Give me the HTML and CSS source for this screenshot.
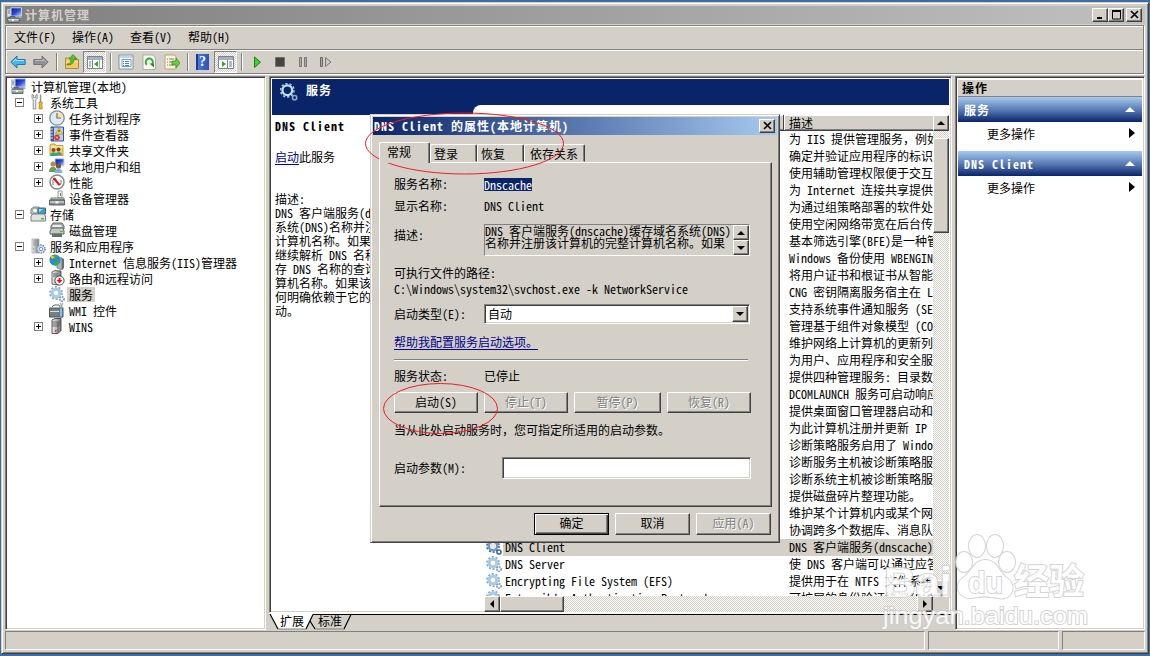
FILE: index.html
```
<!DOCTYPE html>
<html lang="zh-CN">
  <head>
    <meta charset="utf-8">
    <title>计算机管理</title>
    <link rel="stylesheet" href="styles.css">
  </head>
  <body>
    <!-- shared 16x16 icons -->
    <svg class="defs" width="0" height="0">
      <defs>
        <linearGradient id="steel" x1="0" y1="0" x2="1" y2="0">
          <stop offset="0" stop-color="#f2f2ee"/><stop offset="1" stop-color="#77797a"/>
        </linearGradient>
        <linearGradient id="screen" x1="0" y1="0" x2="1" y2="1">
          <stop offset="0" stop-color="#0617a4"/><stop offset=".5" stop-color="#2746d8"/><stop offset="1" stop-color="#c5dcff"/>
        </linearGradient>
        <symbol id="i-computer" viewBox="0 0 16 16">
          <path d="M0 2h4v8H0z" fill="#dfe3e0" stroke="#8b9694" stroke-width=".7"/>
          <path d="M1 4h2M1 6h2" stroke="#6e7c78"/>
          <path d="M4 .8h10.500v8.400H4z" fill="url(#screen)" stroke="#c9d1dc"/>
          <path d="M9 9h4l2 2H8z" fill="#a6acae"/>
          <path d="M3 11V9.500h5V11M1 11h11v4.500H1z" fill="#8d9795" stroke="#4d5654" stroke-width=".8"/>
          <path d="M1 12.800h11" stroke="#e4e8e6"/><path d="M5 12h2v2H5z" fill="#f4f4f0"/>
        </symbol>
        <symbol id="i-tools" viewBox="0 0 16 16">
          <path d="M2 .5v4l1.200 1V15h2.600V5.500l1.400-1v-4L5.800 1v2.500H3.600V1z" fill="#e9ebe9" stroke="#777d7b" stroke-width=".8"/>
          <path d="M10.500 .5v8" stroke="#8d9391" stroke-width="1.500"/>
          <path d="M9 8h3.200v2l-.6 1 .6 1v3H9v-3l.6-1L9 10z" fill="#f5b51d" stroke="#b57406" stroke-width=".6"/>
        </symbol>
        <symbol id="i-clock" viewBox="0 0 16 16">
          <circle cx="8" cy="8" r="7.200" fill="#dcebf7" stroke="#858a8b" stroke-width="1.300"/>
          <path d="M8 8V2a6 6 0 0 1 6 6z" fill="#ffe2a2"/><path d="M8 3v5h4" fill="none" stroke="#7d6a58" stroke-width="1.200"/>
        </symbol>
        <symbol id="i-event" viewBox="0 0 16 16">
          <path d="M2 1h12.500v14H2z" fill="#b9cff0" stroke="#315090"/>
          <path d="M2 1h3v14H2z" fill="#405c96"/><path d="M1 3h3M1 6h3M1 9h3M1 12h3" stroke="#d7e2f2"/>
          <path d="M10 2l3.500 6h-7z" fill="#ffdf2c" stroke="#9b8318" stroke-width=".6"/><path d="M10 4v2.200" stroke="#222"/>
          <circle cx="8" cy="11.500" r="2.800" fill="#da2a28"/><path d="M7 10.500l2 2m0-2l-2 2" stroke="#fff" stroke-width=".8"/>
        </symbol>
        <symbol id="i-share" viewBox="0 0 16 16">
          <path d="M1 3l1-1h4l1 1.500h7v10H1z" fill="#f7d370" stroke="#c79b35"/><path d="M2 5h12" stroke="#fff2be"/>
          <circle cx="4.500" cy="8" r="2" fill="#87502a"/><circle cx="9.500" cy="7.500" r="2" fill="#6e4426"/>
          <path d="M1 14c0-5 7-5 7 0z" fill="#39a678"/><path d="M6.500 13c0-4 6.500-4 6.500 0z" fill="#3e9e8c"/>
        </symbol>
        <symbol id="i-users" viewBox="0 0 16 16">
          <path d="M6 .8h9v7H6z" fill="url(#screen)" stroke="#c6ccd5"/>
          <circle cx="4" cy="6" r="2.500" fill="#b9854a"/><circle cx="9.500" cy="8" r="2.600" fill="#845336"/>
          <path d="M0 14c0-7 8-7 8 0z" fill="#67a04b"/><path d="M5.500 15c0-6 8-6 8 0z" fill="#82b1de"/>
        </symbol>
        <symbol id="i-perf" viewBox="0 0 16 16">
          <circle cx="8" cy="8" r="7" fill="#fff" stroke="#898b8c" stroke-width="1.600"/>
          <path d="M4 11V6l2-2 4 7 2-1V6" fill="none" stroke="#333" stroke-width=".7"/><path d="M4.500 4l6 7" stroke="#dd1719" stroke-width="2"/>
        </symbol>
        <symbol id="i-device" viewBox="0 0 16 16">
          <path d="M9 1h4v7H9z" fill="#f4f5f4" stroke="#999"/><path d="M11 3h1v3h-1z" fill="#54a12f"/>
          <path d="M2 8h13v2H2z" fill="#d5dad8" stroke="#6d7875"/><path d="M.5 10h15v5H.5z" fill="#86918e" stroke="#414b49" stroke-width=".8"/>
          <path d="M1 12h14" stroke="#edf0ef"/><path d="M6.500 11h3v2.500h-3z" fill="#eff1ef"/>
        </symbol>
        <symbol id="i-storage" viewBox="0 0 16 16">
          <path d="M1 3l3-2h5l1 7H1z" fill="#c8cecd" stroke="#7c8583"/><circle cx="5" cy="4.500" r="2.500" fill="#f5f5f2" stroke="#999"/>
          <path d="M8 2h7.500v6H8z" fill="#3b9dcc" stroke="#486a7b"/><path d="M9 3h4L9 6z" fill="#a5e1ee"/>
          <path d="M1 10l2-2h11l1.500 2v5H1z" fill="#e0e3e2" stroke="#798482"/><path d="M11 12h3v1.500h-3z" fill="#47be2e"/>
        </symbol>
        <symbol id="i-disk" viewBox="0 0 16 16">
          <path d="M2 4l2-3h9l2 3v3H2z" fill="#a6aba7" stroke="#656e6b"/><path d="M4 3h8l1 2H3z" fill="#eee"/>
          <path d="M1 9l2-3h11l1 3v3H1z" fill="#c3c8c5" stroke="#626c69"/><path d="M11 9h3v1h-3z" fill="#67b52f"/>
          <path d="M3 11.500h10V15H3z" fill="#666f6c"/>
        </symbol>
        <symbol id="i-gear" viewBox="0 0 16 16">
          <circle cx="7" cy="7" r="5.900" fill="none" stroke="#86abc7" stroke-width="2" stroke-dasharray="2 1.700"/>
          <circle cx="7" cy="7" r="4.200" fill="none" stroke="#a9cde6" stroke-width="2.600"/>
          <circle cx="7" cy="7" r="2.800" fill="#fff" stroke="#7ba3c3" stroke-width=".6"/>
          <circle cx="13" cy="13" r="2.100" fill="#fff" stroke="#789ebc" stroke-width="1.700" stroke-dasharray="1.500 .7"/>
        </symbol>
        <symbol id="i-gear-sel" viewBox="0 0 16 16">
          <circle cx="7" cy="7" r="5.900" fill="none" stroke="#486e9c" stroke-width="2" stroke-dasharray="2 1.700"/>
          <circle cx="7" cy="7" r="4.200" fill="none" stroke="#6e9ac9" stroke-width="2.600"/>
          <circle cx="7" cy="7" r="2.800" fill="#e9e7e2"/><circle cx="13" cy="13" r="2" fill="#fff" stroke="#466d9c" stroke-width="1.700"/>
        </symbol>
        <symbol id="i-apps" viewBox="0 0 16 16">
          <path d="M2 1h7v14H2z" fill="url(#steel)" stroke="#9fa7a8" stroke-width=".7"/><path d="M3 3h5M3 5h5M3 7h4" stroke="#8b989a"/><path d="M3 11h1" stroke="#23bb28"/>
          <circle cx="11" cy="11" r="4" fill="#dbe9f5" stroke="#749bbd" stroke-width="1.700" stroke-dasharray="1.600 .9"/><circle cx="11" cy="11" r="1.800" fill="#fff" stroke="#6d93b6"/>
        </symbol>
        <symbol id="i-iis" viewBox="0 0 16 16">
          <path d="M8 3l5 1v12l-5-2z" fill="#aeb5b6" stroke="#626c6e" stroke-width=".7"/><path d="M13 4l2 1v9l-2 2z" fill="#666f70"/>
          <circle cx="6" cy="6" r="5.600" fill="#278cd7"/><path d="M1 4C3 0 8 0 9 2L6 5 3 4zM5 8l5-2-1 5-3 1z" fill="#3aaf37"/><path d="M1 1l5 2-3 2z" fill="#ffc62b"/>
        </symbol>
        <symbol id="i-route" viewBox="0 0 16 16">
          <path d="M3 2l3-1.500L12 1v12l-3 2-6-1z" fill="url(#steel)" stroke="#454a4b" stroke-width=".8"/><path d="M4 4h5M4 6h5" stroke="#5d6262"/>
          <circle cx="10.500" cy="10.500" r="4.600" fill="#fff" stroke="#222" stroke-width=".8"/><path d="M9.500 8h2v2h2l-3 3.500-3-3.500h2z" fill="#f01515"/>
        </symbol>
        <symbol id="i-wmi" viewBox="0 0 16 16">
          <path d="M3 5l2-2h5l1 2" fill="none" stroke="#596361"/><path d="M.5 6H14v9H.5z" fill="#75817e" stroke="#4d5855"/><path d="M1 9.500h13" stroke="#dde2df"/>
          <path d="M11 6l3-5M14 6l-3-5" stroke="#b7b7b3" stroke-width="1.500"/><path d="M10.500 6h3v9h-3z" fill="#85bef1" stroke="#335c91" stroke-width=".6"/>
        </symbol>
        <symbol id="i-server" viewBox="0 0 16 16">
          <path d="M3 2l3-1.500h6v12l-3 3H3z" fill="url(#steel)" stroke="#333" stroke-width=".8"/>
          <path d="M3 4h6l3-2M3 6h6l3-2M3 8h6l3-2M9 4v11" fill="none" stroke="#555" stroke-width=".8"/><path d="M6 12h1.500v1.500H6z" fill="#f00"/>
        </symbol>
        <symbol id="i-back" viewBox="0 0 16 16">
          <path d="M.8 8L7 2v3.500h8.200v5H7V14z" fill="#3cbbf2" stroke="#1a6296" stroke-width=".8"/><path d="M3 8l3-3v1.500h8" fill="none" stroke="#a9e6fc"/>
        </symbol>
        <symbol id="i-fwd" viewBox="0 0 16 16">
          <path d="M15.200 8L9 2v3.500H.8v5H9V14z" fill="#929292" stroke="#666" stroke-width=".8"/><path d="M2 6.500h8V5l3 3" fill="none" stroke="#bcbcbc"/>
        </symbol>
        <symbol id="i-up" viewBox="0 0 16 16">
          <path d="M1.500 4h5l1 1.500h7v9h-13z" fill="#f4cb63" stroke="#b38d35"/><path d="M2.500 8h11" stroke="#ffe7a0"/>
          <path d="M4 10c3 0 4-2 4-5H6l4-4.500 4 4.500h-3c0 4-2 6-7 6z" fill="#4fc52f" stroke="#277914" stroke-width=".6" transform="translate(-1)"/>
        </symbol>
        <symbol id="i-pane-l" viewBox="0 0 16 16">
          <path d="M.5 2.500h15v12H.5z" fill="#fff" stroke="#78838d"/><path d="M1 3h14v3H1z" fill="#a5b2bd"/><path d="M5.500 6v8M9 8.500h0" stroke="#78838d"/>
          <path d="M2 8h2M2 10h2M2 12h2" stroke="#607992"/><path d="M11 7v6l-4-3z" fill="#35a71f"/><path d="M12.500 6v8" stroke="#9ea7ae"/>
        </symbol>
        <symbol id="i-pane-r" viewBox="0 0 16 16">
          <path d="M.5 2.500h15v12H.5z" fill="#fff" stroke="#78838d"/><path d="M1 3h14v3H1z" fill="#a5b2bd"/><path d="M9.500 6v8" stroke="#78838d"/>
          <path d="M11 8h3M11 10h3M11 12h3" stroke="#607992"/><path d="M4 7v6l4-3z" fill="#35a71f"/>
        </symbol>
        <symbol id="i-props" viewBox="0 0 16 16">
          <path d="M1 1h14v14H1z" fill="#f3f7fb" stroke="#7898b4"/><path d="M1 3h14" stroke="#93b2c9"/><path d="M4 5.500h9v7H4z" fill="#fff" stroke="#79a1c0"/>
          <path d="M5 7.500h1m1 0h4M5 9.500h1m1 0h4M5 11.500h1m1 0h4" stroke="#527ca0"/>
        </symbol>
        <symbol id="i-refresh" viewBox="0 0 16 16">
          <path d="M2 1h10l2.500 3v11.500H2z" fill="#fafbf9" stroke="#a8ada8"/><path d="M5.800 10.800a3.600 3.600 0 1 1 5 0" fill="none" stroke="#36ad32" stroke-width="2"/><path d="M8.500 9.500h4.500v4z" fill="#228723"/>
        </symbol>
        <symbol id="i-export" viewBox="0 0 16 16">
          <path d="M1 1h10l1 2v12H1z" fill="#fbf3d5" stroke="#b9a77b"/><path d="M3 5h1m1 0h5M3 8h1m1 0h5M3 11h1m1 0h5" stroke="#7b8185"/>
          <path d="M8 7h4V4l4 5-4 5v-3H8z" fill="#63cf3f" stroke="#348b20" stroke-width=".7"/>
        </symbol>
      </defs>
    </svg>

    <div class="window">
      <header class="titlebar">
        <svg class="icon"><use href="#i-computer"/></svg>
        <h1 class="titlebar-text">计算机管理</h1>
        <div class="caption-buttons">
          <span class="caption-btn"><svg width="11" height="10"><path d="M2 7h5v2H2z"/></svg></span>
          <span class="caption-btn"><svg width="11" height="10"><path d="M1.500 1h8v8h-8z" fill="none" stroke="#000"/><path d="M1 0h9v2H1z"/></svg></span>
          <span class="caption-btn close"><svg width="11" height="10"><path d="M2 1l7 7M9 1L2 8" stroke="#000" stroke-width="1.700"/></svg></span>
        </div>
      </header>

      <div class="bars">
        <nav class="menubar">
          <span>文件(F)</span><span>操作(A)</span><span>查看(V)</span><span>帮助(H)</span>
        </nav>
        <div class="toolbar">
          <span class="tool"><svg class="icon"><use href="#i-back"/></svg></span>
          <span class="tool"><svg class="icon"><use href="#i-fwd"/></svg></span>
          <i class="sep"></i>
          <span class="tool"><svg class="icon"><use href="#i-up"/></svg></span>
          <span class="tool pressed"><svg class="icon"><use href="#i-pane-l"/></svg></span>
          <i class="sep"></i>
          <span class="tool"><svg class="icon"><use href="#i-props"/></svg></span>
          <span class="tool"><svg class="icon"><use href="#i-refresh"/></svg></span>
          <span class="tool"><svg class="icon"><use href="#i-export"/></svg></span>
          <i class="sep"></i>
          <span class="tool"><b class="help">?</b></span>
          <span class="tool pressed"><svg class="icon"><use href="#i-pane-r"/></svg></span>
          <i class="sep"></i>
          <span class="tool"><svg class="icon" viewBox="0 0 16 16"><path d="M5.500 3v10.500L11.500 8.200z" fill="#3bd02e" stroke="#17830e"/></svg></span>
          <span class="tool"><svg class="icon" viewBox="0 0 16 16"><path d="M3.500 3.500h9v9h-9z" fill="#444" stroke="#707070"/></svg></span>
          <span class="tool"><svg class="icon" viewBox="0 0 16 16"><path d="M4.500 3.500h2v9h-2zM9.500 3.500h2v9h-2z" fill="#aaa" stroke="#777"/></svg></span>
          <span class="tool"><svg class="icon" viewBox="0 0 16 16"><path d="M2.500 3.500h2v9h-2z" fill="#aaa" stroke="#666"/><path d="M7.500 3.500v9L13 8z" fill="#c8c8c8" stroke="#777"/></svg></span>
        </div>
      </div>

      <main class="panes">
        <ul class="tree sunken">
          <li class="root"><svg class="icon"><use href="#i-computer"/></svg><span>计算机管理(本地)</span></li>
          <li><i class="box minus"></i><svg class="icon"><use href="#i-tools"/></svg><span>系统工具</span></li>
          <li class="sub"><i class="box plus"></i><svg class="icon"><use href="#i-clock"/></svg><span>任务计划程序</span></li>
          <li class="sub"><i class="box plus"></i><svg class="icon"><use href="#i-event"/></svg><span>事件查看器</span></li>
          <li class="sub"><i class="box plus"></i><svg class="icon"><use href="#i-share"/></svg><span>共享文件夹</span></li>
          <li class="sub"><i class="box plus"></i><svg class="icon"><use href="#i-users"/></svg><span>本地用户和组</span></li>
          <li class="sub"><i class="box plus"></i><svg class="icon"><use href="#i-perf"/></svg><span>性能</span></li>
          <li class="sub"><i class="box none"></i><svg class="icon"><use href="#i-device"/></svg><span>设备管理器</span></li>
          <li><i class="box minus"></i><svg class="icon"><use href="#i-storage"/></svg><span>存储</span></li>
          <li class="sub"><i class="box none"></i><svg class="icon"><use href="#i-disk"/></svg><span>磁盘管理</span></li>
          <li><i class="box minus"></i><svg class="icon"><use href="#i-apps"/></svg><span>服务和应用程序</span></li>
          <li class="sub"><i class="box plus"></i><svg class="icon"><use href="#i-iis"/></svg><span>Internet 信息服务(IIS)管理器</span></li>
          <li class="sub"><i class="box plus"></i><svg class="icon"><use href="#i-route"/></svg><span>路由和远程访问</span></li>
          <li class="sub"><i class="box none"></i><svg class="icon"><use href="#i-gear"/></svg><span class="selected">服务</span></li>
          <li class="sub"><i class="box none"></i><svg class="icon"><use href="#i-wmi"/></svg><span>WMI 控件</span></li>
          <li class="sub"><i class="box plus"></i><svg class="icon"><use href="#i-server"/></svg><span>WINS</span></li>
        </ul>

        <section class="center">
          <div class="services sunken">
            <div class="services-head">
              <svg width="18" height="18" viewBox="0 0 16 16"><circle cx="6.500" cy="6.500" r="4.300" fill="none" stroke="#c4e2f1" stroke-width="2"/><circle cx="6.500" cy="6.500" r="5.900" fill="none" stroke="#a4cbe2" stroke-width="1.500" stroke-dasharray="2 1.700"/><circle cx="13" cy="13" r="1.900" fill="none" stroke="#8fa9ca" stroke-width="1.400"/></svg>
              <h2>服务</h2>
            </div>
            <div class="services-body">
              <div class="info">
                <h3>DNS Client</h3>
                <p class="start"><a>启动</a>此服务</p>
                <p class="desc">描述:<br>DNS 客户端服务(d<br>系统(DNS)名称并注<br>计算机名称。如果<br>继续解析 DNS 名称<br>存 DNS 名称的查询<br>算机名称。如果该<br>何明确依赖于它的<br>动。</p>
              </div>
              <div class="list">
                <div class="list-main">
                  <div class="list-head"><span class="col-name"></span><span class="col-desc">描述</span></div>
                  <ol class="rows">
                    <li>为 IIS 提供管理服务<span class="fw">，</span>例如</li>
                    <li>确定并验证应用程序的标识</li>
                    <li>使用辅助管理权限便于交互</li>
                    <li>为 Internet 连接共享提供</li>
                    <li>为通过组策略部署的软件处</li>
                    <li>使用空闲网络带宽在后台传</li>
                    <li>基本筛选引擎(BFE)是一种管</li>
                    <li>Windows 备份使用 WBENGIN</li>
                    <li>将用户证书和根证书从智能</li>
                    <li>CNG 密钥隔离服务宿主在 L</li>
                    <li>支持系统事件通知服务 (SE</li>
                    <li>管理基于组件对象模型 (CO</li>
                    <li>维护网络上计算机的更新列</li>
                    <li>为用户、应用程序和安全服</li>
                    <li>提供四种管理服务: 目录数</li>
                    <li>DCOMLAUNCH 服务可启动响应</li>
                    <li>提供桌面窗口管理器启动和</li>
                    <li>为此计算机注册并更新 IP </li>
                    <li>诊断策略服务启用了 Windo</li>
                    <li>诊断服务主机被诊断策略服</li>
                    <li>诊断系统主机被诊断策略服</li>
                    <li>提供磁盘碎片整理功能。</li>
                    <li>维护某个计算机内或某个网</li>
                    <li>协调跨多个数据库、消息队</li>
                    <li class="current"><svg class="icon"><use href="#i-gear-sel"/></svg><span class="name">DNS Client</span><span>DNS 客户端服务(dnscache)</span></li>
                    <li class="full"><svg class="icon"><use href="#i-gear"/></svg><span class="name">DNS Server</span><span>使 DNS 客户端可以通过应答</span></li>
                    <li class="full"><svg class="icon"><use href="#i-gear"/></svg><span class="name">Encrypting File System (EFS)</span><span>提供用于在 NTFS 文件系统</span></li>
                    <li class="full"><svg class="icon"><use href="#i-gear"/></svg><span class="name">Extensible Authentication Protocol</span><span>可扩展的身份验证协议(EAP</span></li>
                  </ol>
                  <div class="hscroll">
                    <span class="btn-sq"><i class="arrow left"></i></span><span class="thumb"></span><span class="btn-sq end"><i class="arrow right"></i></span>
                  </div>
                </div>
                <div class="vscroll">
                  <span class="btn-sq"><i class="arrow up"></i></span>
                  <span class="thumb"></span>
                  <span class="btn-sq end"><i class="arrow down"></i></span>
                  <span class="corner"></span>
                </div>
              </div>
            </div>
          </div>
          <svg class="sheet-tabs" width="683" height="17">
            <path d="M0 0h683v1H0z" fill="#fff"/>
            <path d="M44 1.500h639" stroke="#000"/>
            <path d="M1 1h43l-7 15H9z" fill="#fff"/>
            <path d="M1 1l8 15M44 1.500L37 16M41 8l5 8M82 1.500L75 16" fill="none" stroke="#000" stroke-width="1.200"/>
            <path d="M9 16h28M46 16h29" stroke="#808080"/>
            <text x="11" y="13">扩展</text>
            <text x="49" y="13">标准</text>
          </svg>
        </section>

        <aside class="actions sunken">
          <h2 class="actions-title">操作</h2>
          <h3 class="band">服务<i class="arrow up"></i></h3>
          <p class="more">更多操作<i class="arrow right"></i></p>
          <h3 class="band">DNS Client<i class="arrow up"></i></h3>
          <p class="more">更多操作<i class="arrow right"></i></p>
        </aside>
      </main>

      <footer class="statusbar"><span class="s1"></span><span class="s2"></span><span class="s3"></span></footer>
    </div>

    <div class="dialog">
      <div class="dialog-title">
        <h2>DNS Client 的属性(本地计算机)</h2>
        <span class="caption-btn"><svg width="11" height="10"><path d="M2 1l7 7M9 1L2 8" stroke="#000" stroke-width="1.700"/></svg></span>
      </div>
      <div class="tabs">
        <span class="tab active">常规</span><span class="tab">登录</span><span class="tab">恢复</span><span class="tab wide">依存关系</span>
      </div>
      <div class="page">
        <div class="row r-name"><label>服务名称:</label><mark>Dnscache</mark></div>
        <div class="row r-display"><label>显示名称:</label><span>DNS Client</span></div>
        <div class="row r-desc">
          <label>描述:</label>
          <div class="descbox">
            <p>DNS 客户端服务(dnscache)缓存域名系统(DNS)<br>名称并注册该计算机的完整计算机名称。如果</p>
            <div class="spin"><span class="btn-sq"><i class="arrow up"></i></span><span class="btn-sq"><i class="arrow down"></i></span></div>
          </div>
        </div>
        <div class="path">可执行文件的路径:<br>C:\Windows\system32\svchost.exe -k NetworkService</div>
        <div class="row r-type"><label>启动类型(E):</label><div class="combo sunken">自动<span class="btn-sq"><i class="arrow down"></i></span></div></div>
        <a class="helplink">帮助我配置服务启动选项。</a>
        <hr>
        <div class="row r-status"><label>服务状态:</label><span>已停止</span></div>
        <div class="btns">
          <button>启动(S)</button><button disabled>停止(T)</button><button class="w86" disabled>暂停(P)</button><button disabled>恢复(R)</button>
        </div>
        <p class="hint">当从此处启动服务时<span class="fw">，</span>您可指定所适用的启动参数。</p>
        <div class="row r-param"><label>启动参数(M):</label><div class="field sunken"></div></div>
      </div>
      <div class="dialog-btns">
        <button class="default">确定</button><button>取消</button><button disabled>应用(A)</button>
      </div>
    </div>

    <svg class="marks" width="1150" height="656">
      <ellipse cx="464.500" cy="143.500" rx="99" ry="30.500"/>
      <ellipse cx="440.500" cy="408.500" rx="57" ry="25"/>
    </svg>

    <svg class="watermark" width="220" height="100">
      <text class="wm-logo" x="4" y="65" textLength="68" lengthAdjust="spacingAndGlyphs">Bai</text>
      <ellipse cx="84" cy="30" rx="8" ry="10"/><ellipse cx="97" cy="14" rx="8" ry="11"/>
      <ellipse cx="115" cy="14" rx="8" ry="11"/><ellipse cx="127" cy="30" rx="8" ry="10"/>
      <path d="M105 28C94 28 92 40 84 45C72 53 79 67 91 66C101 64 108 64 118 66C132 69 138 54 127 46C118 39 117 28 105 28z"/>
      <text class="wm-du" x="88" y="61" textLength="35" lengthAdjust="spacingAndGlyphs">du</text>
      <text class="wm-cn" x="134" y="62">经验</text>
      <text class="wm-url" x="3" y="92" textLength="205" lengthAdjust="spacingAndGlyphs">jingyan.baidu.com</text>
    </svg>
  </body>
</html>
```

FILE: styles.css
```
* { box-sizing: border-box; }

body {
  margin: 0;
  width: 1150px;
  height: 656px;
  overflow: hidden;
  position: relative;
  background: #3a6ea5;
  color: #000;
  font: 12px/16px "Noto Sans CJK SC", "Liberation Mono", monospace;
  /* half-width latin, like the old system font */
  font-feature-settings: "hwid";
}

h1, h2, h3, p, ul, ol { margin: 0; padding: 0; list-style: none; }
h1, h2, h3 { font-size: 12px; font-weight: bold; letter-spacing: 1px; }
i { display: block; flex: none; }
.fw { font-feature-settings: normal; }
.defs { position: absolute; }
.icon { width: 16px; height: 16px; flex: none; display: block; }

.sunken {
  border: 1px solid;
  border-color: #808080 #fff #fff #808080;
  box-shadow: inset 1px 1px #404040, inset -1px -1px #d4d0c8;
  padding: 2px;
  background: #fff;
}

/* main window */
.window {
  width: 1148px;
  height: 652px;
  margin: 2px 0 0 1px;
  padding: 3px;
  border: 1px solid;
  border-color: #d4d0c8 #404040 #404040 #d4d0c8;
  box-shadow: inset 1px 1px #fff, inset -1px -1px #808080;
  background: #d4d0c8;
  display: flex;
  flex-direction: column;
}
.titlebar {
  height: 18px;
  display: flex;
  align-items: center;
  padding: 0 3px 0 2px;
  background: linear-gradient(to right, #808080, #c0c0c0);
}
.titlebar-text { color: #d4d0c8; margin-left: 2px; flex: 1; }
.caption-buttons { display: flex; }
.caption-btn {
  width: 16px;
  height: 14px;
  display: flex;
  align-items: center;
  justify-content: center;
  background: #d4d0c8;
  border: 1px solid;
  border-color: #fff #404040 #404040 #fff;
  box-shadow: inset -1px -1px #808080;
}
.caption-btn.close { margin-left: 2px; }

.bars {
  height: 49px;
  margin-top: 1px;
  width: 1139px;
  border: 1px solid #808080;
  box-shadow: inset 1px 1px #fff, 1px 1px #fff;
}
.menubar { height: 23px; padding: 3px 0 0 8px; display: flex; gap: 16px; }
.toolbar {
  height: 24px;
  border-top: 1px solid #808080;
  box-shadow: inset 0 1px #fff;
  display: flex;
  align-items: center;
}
.tool { width: 23px; height: 22px; display: flex; align-items: center; justify-content: center; }
.tool.pressed {
  border: 1px solid;
  border-color: #808080 #fff #fff #808080;
  background: repeating-conic-gradient(#fff 0 25%, #d4d0c8 0 50%) 0 0 / 2px 2px;
}
.sep {
  width: 8px;
  height: 18px;
  background:
    linear-gradient(#808080, #808080) 4px 0 / 1px 18px no-repeat,
    linear-gradient(#fff, #fff) 5px 0 / 1px 18px no-repeat;
}
.help {
  width: 13px;
  height: 16px;
  font: bold 14px/16px "Liberation Serif", serif;
  text-align: center;
  color: #fff;
  background: linear-gradient(to right, #1c3a94 2px, #4a78d8 2px, #2b51b5);
}

.panes { display: flex; gap: 3px; height: 554px; margin-top: 2px; }
.tree { width: 261px; flex: none; padding-top: 1px; }
.tree li { height: 16px; display: flex; align-items: center; padding-left: 7px; white-space: nowrap; }
.tree .sub { padding-left: 26px; }
.tree .root { padding-left: 3px; }
.tree span { margin-left: 2px; padding: 0 2px; height: 15px; line-height: 15px; }
.tree .selected { background: #d4d0c8; }
.box { width: 9px; height: 9px; margin-right: 6px; border: 1px solid #808080; }
.box.none { border: 0; }
.box.minus { background: linear-gradient(#000, #000) center / 5px 1px no-repeat; }
.box.plus { background: linear-gradient(#000, #000) center / 5px 1px no-repeat, linear-gradient(#000, #000) center / 1px 5px no-repeat; }

.center { width: 683px; flex: none; }
.services { height: 537px; padding: 2px; }
.services-head {
  height: 36px;
  background: #0a246a;
  color: #fff;
  display: flex;
  padding: 4px 0 0 8px;
  position: relative;
}
.services-head h2 { margin: -1px 0 0 8px; }
.services-head::after {
  content: "";
  position: absolute;
  right: 0;
  bottom: 0;
  width: 476px;
  height: 10px;
  background: #fff;
  border-radius: 8px 0 0 0;
}
.services-body { display: flex; height: 497px; }
.info { width: 212px; padding: 3px 0 0 3px; white-space: nowrap; }
.info .start { margin-top: 15px; }
.info .desc { margin-top: 27px; line-height: 14px; }
.start a, .helplink { color: #00008b; text-decoration: underline; text-underline-offset: 2px; }

.list { flex: 1; display: flex; overflow: hidden; }
.list-main { flex: 1; overflow: hidden; }
.list-head {
  height: 16px;
  display: flex;
  background: #d4d0c8;
  border-bottom: 1px solid #404040;
  box-shadow: inset 0 1px #fff, inset 0 -1px #808080;
  line-height: 15px;
}
.col-name { width: 300px; border-right: 1px solid #404040; }
.col-desc { padding-left: 4px; border-left: 1px solid #fff; }
.rows { height: 465px; overflow: hidden; }
.rows li { height: 17px; line-height: 15px; padding-left: 305px; display: flex; white-space: pre; }
.rows .full, .rows .current { padding-left: 2px; }
.rows .name { width: 286px; padding-left: 2px; overflow: hidden; flex: none; }
.rows .icon { margin-right: 1px; }
.rows .current { background: linear-gradient(to right, #fff 19px, #d4d0c8 19px); }

.btn-sq {
  width: 16px;
  height: 16px;
  flex: none;
  display: flex;
  align-items: center;
  justify-content: center;
}
.btn-sq, .thumb, button {
  background: #d4d0c8;
  border: 1px solid;
  border-color: #fff #404040 #404040 #fff;
  box-shadow: inset -1px -1px #808080;
}
.hscroll, .vscroll { display: flex; background: repeating-conic-gradient(#fff 0 25%, #d4d0c8 0 50%) 0 0 / 2px 2px; }
.hscroll { height: 16px; }
.hscroll .thumb { width: 64px; }
.hscroll .end { margin-left: auto; }
.vscroll { width: 16px; flex-direction: column; }
.vscroll .thumb { height: 95px; margin-top: 7px; }
.vscroll .end { margin-top: auto; }
.corner { height: 16px; background: #d4d0c8; }

.arrow { width: 0; height: 0; border: 0 solid transparent; }
.arrow.up { border-width: 0 4px 4px; border-bottom-color: #000; }
.arrow.down { border-width: 4px 4px 0; border-top-color: #000; }
.arrow.left { border-width: 4px 4px 4px 0; border-right-color: #000; }
.arrow.right { border-width: 4px 0 4px 4px; border-left-color: #000; }

.sheet-tabs { display: block; background: #d4d0c8; }

.actions { width: 190px; flex: none; }
.actions-title {
  height: 18px;
  padding: 0 0 0 4px;
  line-height: 15px;
  background: #d4d0c8;
  border-top: 1px solid #fff;
  border-bottom: 1px solid #808080;
}
.band {
  height: 25px;
  display: flex;
  align-items: center;
  justify-content: space-between;
  padding: 0 7px 0 6px;
  color: #fff;
  background: linear-gradient(#a6caf0, #5374b0 55%, #0a246a);
}
.band .arrow { border-width: 0 5px 5px; border-bottom-color: #fff; }
.more { height: 29px; padding: 4px 7px 0 29px; display: flex; justify-content: space-between; }
.more .arrow { border-width: 5px 0 5px 6px; margin-top: 2px; }

.statusbar { display: flex; gap: 3px; height: 19px; margin-top: 1px; }
.statusbar span { border: 1px solid; border-color: #808080 #fff #fff #808080; }
.s1 { width: 920px; }
.s2 { width: 131px; }
.s3 { width: 83px; }

/* properties dialog */
.dialog {
  position: absolute;
  left: 370px;
  top: 114px;
  width: 410px;
  height: 429px;
  padding: 2px;
  background: #d4d0c8;
  border: 1px solid;
  border-color: #d4d0c8 #404040 #404040 #d4d0c8;
  box-shadow: inset 1px 1px #fff, inset -1px -1px #808080;
}
.dialog-title {
  height: 18px;
  display: flex;
  align-items: center;
  justify-content: space-between;
  padding: 0 2px 0 1px;
  color: #fff;
  background: linear-gradient(to right, #0a246a, #a6caf0);
}
.dialog-title h2 { line-height: 15px; margin-top: -1px; }
.tabs { display: flex; align-items: flex-end; height: 27px; padding-left: 6px; }
.tab {
  width: 47px;
  height: 18px;
  padding-left: 3px;
  line-height: 18px;
  border: 1px solid;
  border-color: #fff #404040 transparent #fff;
  border-radius: 2px 2px 0 0;
  box-shadow: inset -1px 0 #808080;
}
.tab.wide { width: 61px; padding-left: 5px; }
.tab.active {
  width: 51px;
  height: 21px;
  padding: 0 0 0 7px;
  margin-bottom: -1px;
  background: #d4d0c8;
  position: relative;
  z-index: 1;
  border-bottom: 0;
}
.page {
  height: 345px;
  width: 393px;
  margin-left: 6px;
  padding: 13px 0 0 14px;
  border: 1px solid;
  border-color: #fff #404040 #404040 #fff;
  box-shadow: inset -1px -1px #808080;
}
.row { display: flex; }
.row label { width: 90px; flex: none; }
mark { background: #0a246a; color: #fff; height: 13px; line-height: 13px; margin-top: 2px; }
.r-display { margin-top: 6px; }
.r-desc { margin-top: 10px; height: 32px; }
.r-desc label { padding-top: 3px; }
.descbox {
  width: 266px;
  display: flex;
  justify-content: space-between;
  border: 1px solid;
  border-color: #808080 #fff #fff #808080;
  line-height: 12px;
  white-space: nowrap;
}
.spin .btn-sq { height: 15px; }
.path { margin-top: 9px; }
.r-type { margin-top: 7px; height: 20px; align-items: center; }
.combo { width: 266px; height: 20px; display: flex; justify-content: space-between; padding: 1px 1px 1px 3px; line-height: 16px; }
.helplink { display: block; margin-top: 10px; }
.page hr { width: 354px; height: 2px; margin: 9px 0 7px; border: 0; border-top: 1px solid #808080; border-bottom: 1px solid #fff; }
.btns { display: flex; gap: 6px; margin-top: 8px; }
button {
  width: 84px;
  height: 21px;
  padding: 0 0 2px;
  color: #000;
  font: inherit;
  font-feature-settings: inherit;
  line-height: 16px;
}
button:disabled { color: #808080; text-shadow: 1px 1px #fff; }
.w86 { width: 87px; }
.hint { margin-top: 9px; }
.r-param { margin-top: 19px; align-items: center; }
.r-param label { width: 108px; }
.field { width: 249px; height: 22px; }
.dialog-btns { display: flex; gap: 6px; padding: 6px 0 0 161px; }
.dialog-btns button { width: 75px; height: 22px; }
.dialog-btns .default { border: 1px solid #000; box-shadow: inset 1px 1px #fff, inset -1px -1px #404040, inset -2px -2px #808080; }

/* red rings and logo on top of everything */
.marks { position: absolute; left: 0; top: 0; pointer-events: none; }
.marks ellipse { fill: none; stroke: #ed1c24; stroke-width: 1; }
.watermark { position: absolute; left: 880px; top: 532px; opacity: .85; }
.watermark > * { fill: #fff; stroke: #cdcdcd; stroke-width: 2; paint-order: stroke; font-feature-settings: normal; }
.wm-logo { font: bold 43px "Liberation Sans", Arial, sans-serif; }
.wm-du { font: bold 30px "Liberation Sans", Arial, sans-serif; }
.wm-cn { font: bold 35px "Noto Sans CJK SC", sans-serif; }
.wm-url { font: 24px "Liberation Sans", Arial, sans-serif; }
```
